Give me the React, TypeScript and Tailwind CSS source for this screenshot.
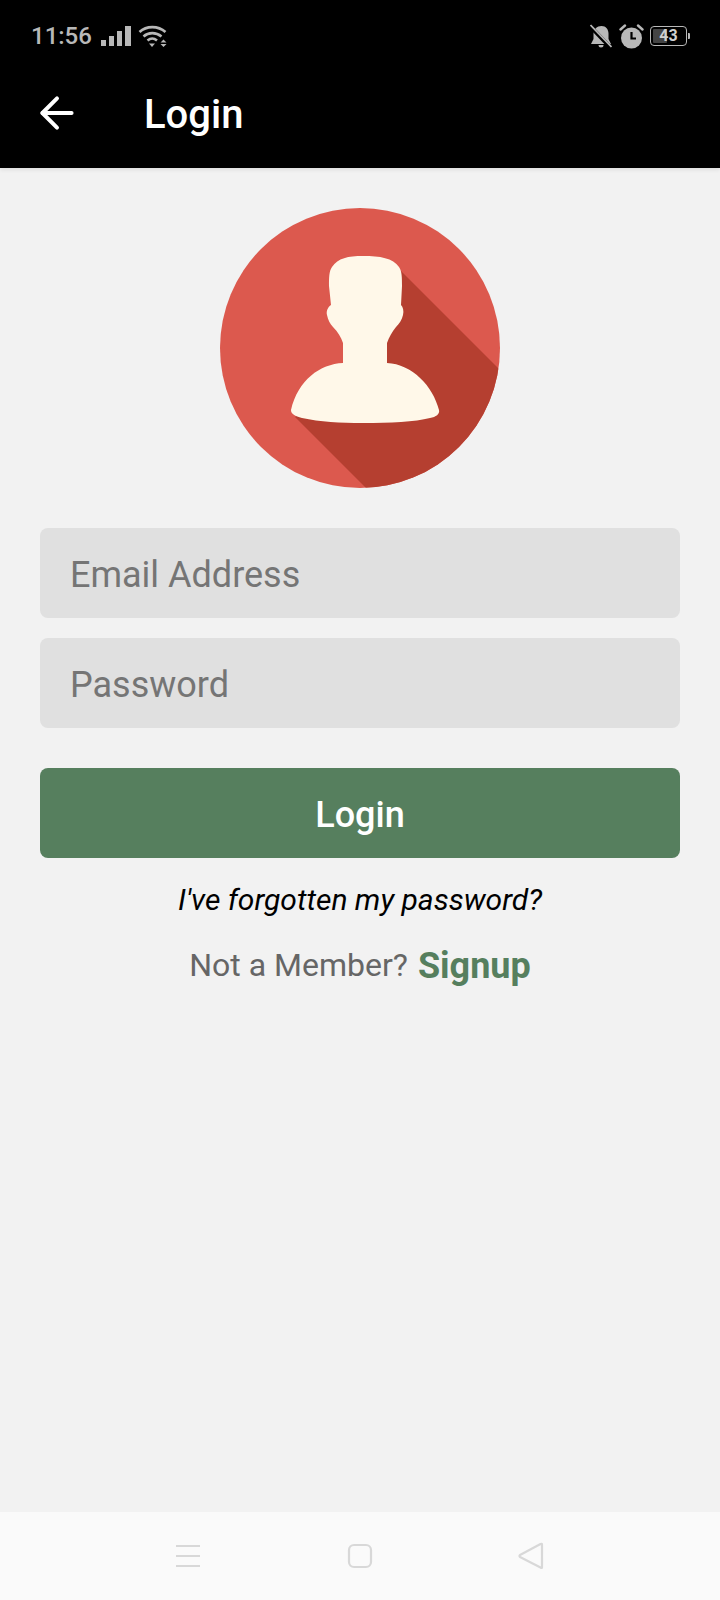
import { ArrowLeft } from 'lucide-react';

function StatusBar() {
  return (
    <div className="flex h-[72px] items-center justify-between pl-[31px] pr-[30px] text-[#b8b8b8]">
      <div className="flex items-center">
        <span className="w-[60px] text-[24px] font-medium leading-none">11:56</span>
        <svg width="30" height="20" viewBox="0 0 30 20" className="ml-[10px]" fill="currentColor">
          <rect x="0" y="14" width="5" height="6" />
          <rect x="8" y="10" width="5" height="10" />
          <rect x="16" y="5" width="5" height="15" />
          <rect x="24" y="0" width="6" height="20" />
        </svg>
        <svg width="29" height="23" viewBox="0 0 29 23" className="ml-[7px]" fill="none" stroke="currentColor">
          <path d="M1.5 7C8.5 0.5 20 0.5 27.5 7" strokeWidth="2.6" />
          <path d="M5.5 11.5C10.5 7 18 7 23.5 11.5" strokeWidth="2.6" />
          <path d="M9.5 15.5C12.5 13 16 13 19 15.5" strokeWidth="2.6" />
          <path d="M11 18.5h6l-3 3.5z" fill="currentColor" stroke="none" />
          <path d="M22.5 17.5h6l-3-3z M22.5 19h6l-3 3z" fill="currentColor" stroke="none" />
        </svg>
      </div>
      <div className="flex items-center">
        <svg width="22" height="24" viewBox="0 0 22 24" fill="currentColor">
          <path d="M11.5 2C16 2 18.5 5.5 18.5 9.5V15L21 20H1L3.5 15V9.5C3.5 5.5 7 2 11.5 2Z" />
          <path d="M8.5 21h5a2.5 2.5 0 0 1-5 0z" />
          <path d="M-1 1L21 24" stroke="#000" strokeWidth="4" />
          <path d="M0.5 1L21.5 23" stroke="currentColor" strokeWidth="1.8" />
        </svg>
        <svg width="25" height="25" viewBox="0 0 25 25" className="ml-[7px]" fill="currentColor">
          <circle cx="12.5" cy="14" r="10.5" />
          <path d="M1.5 5.5L6 1.5M23.5 5.5L19 1.5" stroke="currentColor" strokeWidth="2.4" strokeLinecap="round" />
          <path d="M12.5 8V14.5H17" stroke="#000" strokeWidth="2.2" fill="none" />
        </svg>
        <div className="relative ml-[6px] flex h-[20px] w-[37px] items-center rounded-[4px] border-[1.5px] border-[#b8b8b8]">
          <div className="absolute inset-y-[2px] left-[2px] w-[14px] rounded-[1px] bg-[#444444]" />
          <span className="relative w-full text-center text-[16px] font-bold leading-none text-[#d0d0d0]">43</span>
        </div>
        <div className="ml-[1px] h-[6px] w-[2px] rounded-r-[1px] bg-[#b8b8b8]" />
      </div>
    </div>
  );
}

function Avatar() {
  return (
    <svg width="280" height="280" viewBox="0 0 280 280">
      <defs>
        <clipPath id="avatar-circle">
          <circle cx="140" cy="140" r="140" />
        </clipPath>
      </defs>
      <circle cx="140" cy="140" r="140" fill="#dc594e" />
      <path d="M178 60L290 172V290H156L75 209L160 150V100Z" fill="#b53f30" clipPath="url(#avatar-circle)" />
      <path
        d="M143 48C160 48 173 50 179 59C182 63 182 70 182 78L181 97C183 99 184 103 183 107C182 112 179 116 176 119C172 124 169 129 167 135V155C192 156 213 178 219 202C220 206 216 209 210 210C195 214 170 215 143 215C120 215 100 214 82 210C75 208 71 206 71 202C78 172 100 156 123 155V135C121 129 118 124 113 119C110 116 108 112 107 107C106 103 108 99 111 97L109 78C109 70 109 63 112 59C118 50 128 48 143 48Z"
        fill="#fff8e9"
      />
    </svg>
  );
}

function Field({ label }: { label: string }) {
  return (
    <div className="flex h-[90px] items-center rounded-[8px] bg-[#e0e0e0] px-[30px] pt-[3px] text-[36px] leading-none text-[#757575]">
      {label}
    </div>
  );
}

function NavBar() {
  return (
    <div className="flex h-[88px] items-center justify-center bg-[#fafafa] text-[#d8d8d8]">
      <svg width="24" height="24" viewBox="0 0 24 24" stroke="currentColor" strokeWidth="2.2">
        <path d="M0 2h24M0 12h24M0 22h24" />
      </svg>
      <svg width="26" height="26" viewBox="0 0 26 26" fill="none" stroke="currentColor" strokeWidth="2.2" className="ml-[147px]">
        <rect x="2" y="2" width="22" height="22" rx="5" />
      </svg>
      <svg width="26" height="28" viewBox="0 0 26 28" fill="none" stroke="currentColor" strokeWidth="2.2" strokeLinejoin="round" className="ml-[145px]">
        <path d="M24 2.5V25.5Q24 26.5 22.5 25.5L2 15Q1 14 2 13L22.5 2Q24 1.5 24 2.5Z" />
      </svg>
    </div>
  );
}

export default function App() {
  return (
    <div className="flex h-[1600px] w-[720px] flex-col overflow-hidden bg-[#f2f2f2] font-['Roboto',sans-serif]">
      <header className="relative z-10 h-[168px] bg-black shadow-[0_2px_4px_rgba(0,0,0,0.08)]">
        <StatusBar />
        <div className="flex h-[82px] items-center pl-[32px] text-white">
          <ArrowLeft size={50} strokeWidth={1.9} />
          <h1 className="ml-[62px] pt-[4px] text-[40px] font-medium leading-none">Login</h1>
        </div>
      </header>

      <main className="flex flex-1 flex-col px-[40px] pt-[40px]">
        <div className="flex justify-center">
          <Avatar />
        </div>
        <div className="mt-[40px] flex flex-col gap-[20px]">
          <Field label="Email Address" />
          <Field label="Password" />
        </div>
        <button className="mt-[40px] h-[90px] rounded-[8px] bg-[#567f5e] pt-[3px] text-[36px] font-medium text-white">
          Login
        </button>
        <p className="mt-[23px] text-center text-[30px] italic leading-[38px] text-black">
          I've forgotten my password?
        </p>
        <p className="mt-[25px] flex items-baseline justify-center text-[32px] leading-[40px] text-[#666666]">
          Not a Member?
          <span className="ml-[10px] translate-y-[2px] text-[36px] font-bold text-[#567f5e]">Signup</span>
        </p>
      </main>

      <NavBar />
    </div>
  );
}
